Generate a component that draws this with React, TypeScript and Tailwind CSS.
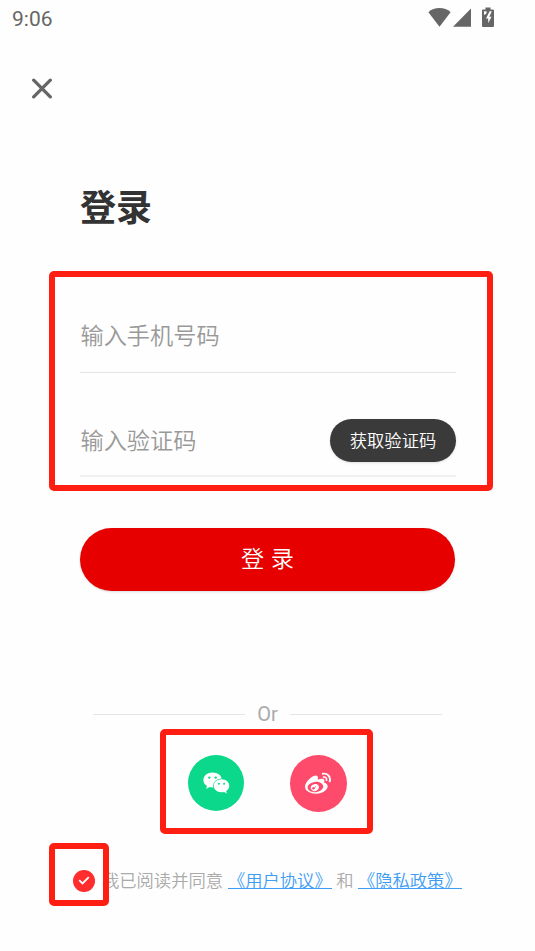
import { useState } from 'react';
import { FaWeibo } from 'react-icons/fa';

function StatusBar() {
    return (
        <div className="flex h-[38px] items-center justify-between pl-[12px] pr-[41px]">
            <span className="text-[21px] leading-[38px] text-[#666]">9:06</span>
            <div className="mb-[3px] flex items-start text-[#666]">
                <svg width="23" height="19" viewBox="0 0 23 19" fill="currentColor">
                    <path d="M0.4 4.2C3.4 1.4 7.2 0 11.5 0s8.100 1.400 11.100 4.200L11.500 18.700z" />
                </svg>
                <svg className="ml-[2px]" width="18" height="19" viewBox="0 0 18 19" fill="currentColor">
                    <path d="M18 0.500V18.700H0z" />
                </svg>
                <svg className="ml-[11px] -mt-px" width="12" height="20" viewBox="0 0 12 20">
                    <path
                        fill="currentColor"
                        d="M3.500 0.500h5v2H11a1 1 0 0 1 1 1v15.500a1 1 0 0 1-1 1H1a1 1 0 0 1-1-1V3.500a1 1 0 0 1 1-1h2.500z"
                    />
                    <path fill="#fefefe" d="M2 4.200h2.500v2.300L2 8zM9.800 4.200H7.600L4 11.500h2.200v4.800l3.300-6.600H7.300z" />
                </svg>
            </div>
        </div>
    );
}

function WechatIcon() {
    return (
        <svg width="27" height="22" viewBox="0 0 27 22">
            <path
                fill="white"
                d="M9.500 0.500C4.400 0.500 0.400 3.700 0.400 7.900c0 2.500 1.300 4.600 3.500 6L3.200 17l3.400-1.900c1 .3 2 .4 3.100.4 5 0 9.100-3.200 9.100-7.600S14.700 .5 9.500 .5z"
            />
            <ellipse cx="18.500" cy="13.800" rx="8.500" ry="7.300" fill="#0bd88a" />
            <path
                fill="white"
                d="M18.500 7.300c-4.400 0-7.800 2.900-7.800 6.500s3.400 6.500 7.800 6.500c.9 0 1.800-.1 2.600-.3l2.700 1.500-.6-2.500c1.900-1.200 3.100-3.100 3.100-5.200 0-3.600-3.400-6.500-7.800-6.500z"
            />
            <g fill="#0bd88a">
                <circle cx="6.300" cy="5.600" r="1.200" />
                <circle cx="12.700" cy="5.600" r="1.200" />
                <circle cx="15.900" cy="11.800" r="1" />
                <circle cx="21.100" cy="11.800" r="1" />
            </g>
        </svg>
    );
}

export default function App() {
    const [agreed, setAgreed] = useState(true);

    return (
        <div className="relative h-[951px] w-[535px] overflow-hidden bg-[#fefefe] font-['Roboto','Noto_Sans_CJK_SC',sans-serif]">
            <StatusBar />

            <button className="ml-[32px] mt-[40px] block text-[#666]" aria-label="关闭">
                <svg width="20" height="21" viewBox="0 0 20 21" stroke="currentColor" strokeWidth="3.300" strokeLinecap="round">
                    <path d="M1.700 2.200l16.600 16.600M18.300 2.200L1.700 18.800" />
                </svg>
            </button>

            <main className="ml-[80px] w-[376px]">
                <h1 className="mt-[84px] text-[36px] font-bold leading-[52px] text-[#333]">登录</h1>

                <div className="mt-[77px] flex h-[61px] items-start border-b border-[#e5e5e5] pl-[0.500px] text-[23.200px] font-[350] leading-[48px] text-[#999]">
                    输入手机号码
                </div>

                <div className="mt-[46px] flex h-[58px] items-start justify-between border-b-2 border-[#f0f0f0]">
                    <span className="pl-[0.500px] text-[23.200px] font-[350] leading-[45px] text-[#999]">输入验证码</span>
                    <button className="h-[43px] w-[126px] rounded-full bg-[#3a3a3a] pt-px text-[17.300px] font-[350] leading-[43px] text-white shadow">
                        获取验证码
                    </button>
                </div>

                <button className="mt-[51px] h-[63px] w-[375px] rounded-full bg-[#e60000] text-[23.200px] font-[350] leading-[63px] text-white shadow [word-spacing:1px]">
                    登 录
                </button>
            </main>

            <div className="ml-[93px] mt-[111px] flex h-[24px] w-[349px] items-center justify-between">
                <span className="h-px w-[152px] bg-[#e5e5e5]" />
                <span className="text-[20px] leading-[24px] text-[#aaa]">Or</span>
                <span className="h-px w-[152px] bg-[#e5e5e5]" />
            </div>

            <div className="ml-[188px] mt-[29px] flex gap-[46px]">
                <button className="flex size-[56px] items-center justify-center rounded-full bg-[#0bd88a] text-white">
                    <WechatIcon />
                </button>
                <button className="flex size-[57px] items-center justify-center rounded-full bg-[#ff4b6b] pr-px text-white">
                    <FaWeibo size={26} />
                </button>
            </div>

            <div className="ml-[73px] mt-[55px] flex h-[27px] items-center whitespace-nowrap text-[17.300px] font-[350] leading-[26px] text-[#aaa]">
                <button
                    onClick={() => setAgreed(!agreed)}
                    className="mr-[7px] flex size-[22px] shrink-0 items-center justify-center rounded-full bg-[#ff2d2d]"
                >
                    {agreed && (
                        <svg width="12" height="9" viewBox="0 0 12 9" fill="none" stroke="white" strokeWidth="1.800">
                            <path d="M1.200 4.200l3.300 3.200L10.800 1.200" />
                        </svg>
                    )}
                </button>
                <span>我已阅读并同意</span>
                <a className="ml-[5px] mb-[3px] h-[19px] border-b border-[#3d9df5] leading-[22px] text-[#3d9df5]">《用户协议》</a>
                <span className="mx-[4.500px]">和</span>
                <a className="mb-[3px] h-[19px] border-b border-[#3d9df5] leading-[22px] text-[#3d9df5]">《隐私政策》</a>
            </div>

            {/* Highlight frames */}
            <div className="pointer-events-none absolute left-[49px] top-[271px] h-[220px] w-[444px] rounded-[5px] border-6 border-[#ff1e12]" />
            <div className="pointer-events-none absolute left-[160px] top-[729px] h-[105px] w-[213px] rounded-[5px] border-6 border-[#ff1e12]" />
            <div className="pointer-events-none absolute left-[49px] top-[843px] h-[63px] w-[60px] rounded-[5px] border-6 border-[#ff1e12]" />
        </div>
    );
}
